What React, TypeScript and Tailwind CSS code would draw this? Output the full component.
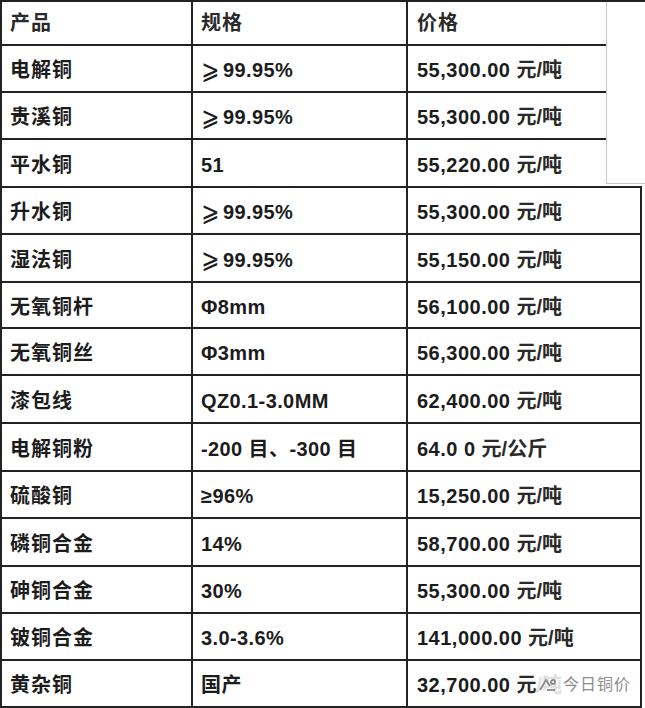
import * as React from "react";

type Row = { name: string; spec: string; price: string; unit: string; h: number };

// Top block: header + first three rows (narrower, pasted over the main table)
const TOP: Row[] = [
  { name: "电解铜", spec: "⩾99.95%", price: "55,300.00", unit: "元/吨", h: 47 },
  { name: "贵溪铜", spec: "⩾99.95%", price: "55,300.00", unit: "元/吨", h: 47 },
  { name: "平水铜", spec: "51", price: "55,220.00", unit: "元/吨", h: 46 },
];

const BOTTOM: Row[] = [
  { name: "升水铜", spec: "⩾99.95%", price: "55,300.00", unit: "元/吨", h: 47 },
  { name: "湿法铜", spec: "⩾99.95%", price: "55,150.00", unit: "元/吨", h: 48 },
  { name: "无氧铜杆", spec: "Φ8mm", price: "56,100.00", unit: "元/吨", h: 46 },
  { name: "无氧铜丝", spec: "Φ3mm", price: "56,300.00", unit: "元/吨", h: 47 },
  { name: "漆包线", spec: "QZ0.1-3.0MM", price: "62,400.00", unit: "元/吨", h: 48 },
  { name: "电解铜粉", spec: "-200 目、-300 目", price: "64.0 0", unit: "元/公斤", h: 48 },
  { name: "硫酸铜", spec: "≥96%", price: "15,250.00", unit: "元/吨", h: 47 },
  { name: "磷铜合金", spec: "14%", price: "58,700.00", unit: "元/吨", h: 48 },
  { name: "砷铜合金", spec: "30%", price: "55,300.00", unit: "元/吨", h: 47 },
  { name: "铍铜合金", spec: "3.0-3.6%", price: "141,000.00", unit: "元/吨", h: 47 },
  { name: "黄杂铜", spec: "国产", price: "32,700.00", unit: "元/吨", h: 47 },
];

const FONT = "font-['Liberation_Sans','Noto_Sans_CJK_SC',sans-serif]";

function Spec({ spec }: { spec: string }) {
  if (spec.startsWith("⩾")) {
    return (
      <span className="flex items-center">
        <span className="font-['DejaVu_Sans','Noto_Sans_CJK_SC',sans-serif] font-normal text-[27px] leading-none -mt-[2px] mr-[1px] scale-x-[0.8] -ml-[2px]">⩾</span>
        {spec.slice(1)}
      </span>
    );
  }
  return <span>{spec}</span>;
}

function TableRow({ row, last, wide }: { row: Row; last?: boolean; wide?: boolean }) {
  return (
    <div
      className={`flex ${last ? "" : "border-b-2 border-[#222]"}`}
      style={{ height: row.h }}
    >
      <div className="w-[191px] shrink-0 border-r-2 border-[#222] pl-[8px] pt-[3px] flex items-center tracking-[1px]">
        {row.name}
      </div>
      <div className="w-[215px] shrink-0 border-r-2 border-[#222] pl-[8px] pt-[3px] flex items-center tracking-[0.4px]">
        <Spec spec={row.spec} />
      </div>
      <div
        className={`${wide ? "w-[234px] border-r-2 border-[#222]" : "w-[198px]"} shrink-0 pl-[9px] pt-[3px] flex items-center whitespace-nowrap tracking-[0.5px]`}
      >
        {row.price}
        <span className="ml-[6px] font-semibold text-[#2a2a2a] tracking-normal">{row.unit}</span>
      </div>
    </div>
  );
}

function Watermark() {
  return (
    <div className="absolute left-[537px] top-[672px] flex items-center gap-[4px] bg-white/85 pr-1 h-[26px]">
      <svg width="22" height="20" viewBox="0 0 22 20" fill="none" stroke="#8a8a8a" strokeWidth="1.8">
        <path d="M3 15 L9 5 L13 11" />
        <path d="M10 15 h8" />
        <circle cx="16" cy="7" r="2" />
      </svg>
      <span className="text-[16px] font-normal text-[#8c8c8c] tracking-[1px]">今日铜价</span>
    </div>
  );
}

export default function App() {
  return (
    <div className={`relative w-[645px] h-[708px] bg-white text-[#1c1c1c] text-[20px] font-bold ${FONT}`}>
      {/* top block */}
      <div className="flex border-t-2 border-[#222]">
        <div className="w-[606px] shrink-0 border-l-2 border-[#222]">
          <div className="flex h-[44px] border-b-2 border-[#222] font-semibold text-[#2a2a2a] tracking-[1px]">
            <div className="w-[191px] shrink-0 border-r-2 border-[#222] pl-[8px] flex items-center">产品</div>
            <div className="w-[215px] shrink-0 border-r-2 border-[#222] pl-[8px] flex items-center">规格</div>
            <div className="w-[198px] shrink-0 pl-[9px] flex items-center">价格</div>
          </div>
          {TOP.map((r, i) => (
            <TableRow key={r.name} row={r} last={i === TOP.length - 1} />
          ))}
        </div>
        <div className="flex-1 h-[182px] border-l border-b border-[#c8c8c8]" />
      </div>
      {/* main table */}
      <div className="w-[642px] border-t-2 border-l-2 border-b-2 border-[#222]">
        {BOTTOM.map((r, i) => (
          <TableRow key={r.name} row={{ ...r, h: i === BOTTOM.length - 1 ? r.h - 2 : r.h }} last={i === BOTTOM.length - 1} wide />
        ))}
      </div>
      <Watermark />
    </div>
  );
}
